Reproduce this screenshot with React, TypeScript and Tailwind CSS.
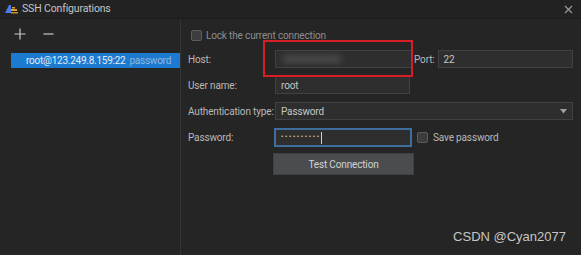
import React from 'react';

const font = {fontFamily: 'Roboto, "Liberation Sans", Arial, sans-serif'};

function Checkbox() {
  return <span className="inline-block h-[11px] w-[11px] rounded-[2px] border border-[#5a5d60] bg-[#3a3c3e]" />;
}

export default function App() {
  return (
    <div className="flex h-[255px] w-[581px] flex-col overflow-hidden whitespace-nowrap bg-[#252525] text-[10px] tracking-[-0.15px] text-[#b9b9b9]" style={font}>
      {/* title bar */}
      <div className="flex h-[19px] items-center border-b border-[#1b1b1b] bg-[#222222] pl-[4px] pr-[8px]">
        <svg width="15" height="10" viewBox="0 0 15 10" className="mr-[3px]">
          <path d="M1 9 L5 1 L7 1 L7 9 Z" fill="#4b7bec" />
          <rect x="7" y="5" width="6" height="2" fill="#e0a030" />
          <rect x="7" y="8" width="7" height="1.5" fill="#c98b2a" />
          <rect x="8" y="3" width="3" height="1.5" fill="#e0a030" />
        </svg>
        <span className="text-[10.5px] text-[#c4c4c4]">SSH Configurations</span>
        <svg width="9" height="9" viewBox="0 0 9 9" className="ml-auto">
          <path d="M1 1 L8 8 M8 1 L1 8" stroke="#9a9a9a" strokeWidth="1.2" />
        </svg>
      </div>

      <div className="flex flex-1">
        {/* left panel */}
        <div className="w-[181px] border-r border-[#333333] pt-[9px]">
          <div className="flex items-center gap-[17px] pl-[14px]">
            <svg width="12" height="12" viewBox="0 0 12 12">
              <path d="M6 0.5 V11.5 M0.5 6 H11.5" stroke="#c9c9c9" strokeWidth="1.2" />
            </svg>
            <svg width="11" height="12" viewBox="0 0 11 12">
              <path d="M0.5 6 H10.5" stroke="#c9c9c9" strokeWidth="1.2" />
            </svg>
          </div>
          <div className="ml-[11px] mt-[13px] flex h-[15px] items-center bg-[#1c7bd0] pl-[15px] tracking-[-0.25px]">
            <span className="text-[#e2ecf6]">root@123.249.8.159:22</span>
            <span className="ml-[4px] text-[#8fb6da]">password</span>
          </div>
        </div>

        {/* right panel */}
        <div className="relative flex-1 pl-[7px] pr-[8px] pt-[9px]">
          <div className="flex items-center gap-[4px] pl-[3px] text-[#8d8d8d]">
            <Checkbox />
            <span>Lock the current connection</span>
          </div>

          <div className="mt-[7px] grid grid-cols-[87px_137px_1fr] items-center gap-y-[8px]">
            <span>Host:</span>
            <div className="relative h-[18px]">
              <div className="flex h-[18px] items-center border border-[#3f4143] bg-[#2e2e2e] px-[6px]">
                <span className="h-[8px] w-[60px] rounded-full bg-[#4a4a4a] blur-[3px]" />
              </div>
              <div className="absolute left-[-12px] top-[-10px] h-[37px] w-[150px] border-2 border-[#d51f25]" />
            </div>
            <div className="flex items-center pl-[2px]">
              <span className="mr-[3px]">Port:</span>
              <div className="flex h-[18px] flex-1 items-center border border-[#3f4143] bg-[#2e2e2e] px-[5px] text-[#c6c6c6]">22</div>
            </div>

            <span>User name:</span>
            <div className="flex h-[18px] w-[135px] items-center border border-[#3f4143] bg-[#2e2e2e] px-[5px] text-[#c6c6c6]">root</div>
            <span />

            <span>Authentication type:</span>
            <div className="col-span-2 flex h-[18px] items-center border border-[#3f4143] bg-[#2e2e2e] px-[5px] text-[#c6c6c6]">
              <span>Password</span>
              <svg width="7" height="5" viewBox="0 0 7 5" className="ml-auto">
                <path d="M0 0 H7 L3.5 4.5 Z" fill="#a0a0a0" />
              </svg>
            </div>

            <span>Password:</span>
            <div className="-ml-[1px] flex h-[19px] items-center border-2 border-[#3d6e9e] bg-[#2e2e2e] px-[5px] text-[#d0d0d0]">
              <span className="text-[7px] tracking-[1.6px]">••••••••••</span>
              <span className="h-[12px] w-px bg-[#d0d0d0]" />
            </div>
            <div className="flex items-center gap-[5px] pl-[5px]">
              <Checkbox />
              <span>Save password</span>
            </div>

            <span />
            <div className="-ml-[2px] -mt-[2px] flex h-[22px] w-[141px] items-center justify-center border border-[#3e4144] bg-[#4a4d50] text-[#d4d4d4]">
              Test Connection
            </div>
            <span />
          </div>

          <div className="absolute bottom-[9px] right-[15px] text-[13px] tracking-normal text-[#c6c6c6]" style={{fontFamily: '"Liberation Sans", Arial, sans-serif'}}>
            CSDN @Cyan2077
          </div>
        </div>
      </div>
    </div>
  );
}
